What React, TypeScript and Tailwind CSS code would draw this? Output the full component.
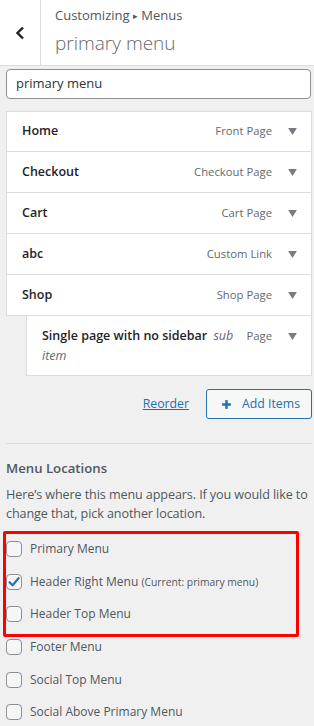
import { Plus } from 'lucide-react'

const items = [
  { title: 'Home', type: 'Front Page' },
  { title: 'Checkout', type: 'Checkout Page' },
  { title: 'Cart', type: 'Cart Page' },
  { title: 'abc', type: 'Custom Link' },
  { title: 'Shop', type: 'Shop Page' },
]

const locations = [
  { label: 'Primary Menu', checked: false },
  { label: 'Header Right Menu', checked: true, current: '(Current: primary menu)' },
  { label: 'Header Top Menu', checked: false },
  { label: 'Footer Menu', checked: false },
  { label: 'Social Top Menu', checked: false },
  { label: 'Social Above Primary Menu', checked: false },
]

function Arrow() {
  return (
    <svg width="9" height="7" viewBox="0 0 10 8" className="shrink-0">
      <path d="M0 0 H10 L5 8 Z" fill="#787c82" />
    </svg>
  )
}

function Checkbox({ checked }: { checked: boolean }) {
  return (
    <span className="flex h-4 w-4 shrink-0 items-center justify-center rounded-[4px] border border-[#8c8f94] bg-[#f6f6f6]">
      {checked && (
        <svg width="14" height="14" viewBox="0 0 14 14">
          <path d="M2.5 7.2 L5.6 10.3 L11.6 3.2" stroke="#2271b1" strokeWidth="2.2" fill="none" strokeLinecap="round" strokeLinejoin="round" />
        </svg>
      )}
    </span>
  )
}

export default function App() {
  return (
    <div
      className="relative min-h-[726px] w-[314px] overflow-hidden bg-[#f0f0f1] text-[#50575e]"
      style={{ fontFamily: '"Open Sans", "Noto Sans", sans-serif' }}
    >
      {/* header */}
      <div className="flex h-[66px] border-b border-[#dcdcde] bg-white">
        <div className="flex w-[41px] shrink-0 items-center justify-center border-r border-[#dcdcde]">
          <svg width="10" height="14" viewBox="0 0 10 14">
            <path d="M8 1.5 L2.5 7 L8 12.5" stroke="#1d2327" strokeWidth="2.4" fill="none" />
          </svg>
        </div>
        <div className="flex flex-col pl-[14px] pt-[5px]">
          <div className="text-[13px] leading-[20px] text-[#50575e]">
            Customizing <span className="text-[9px] align-[1px]">▸</span> Menus
          </div>
          <div className="mt-[2px] text-[19px] font-light leading-[30px] text-[#646970]">primary menu</div>
        </div>
      </div>

      <div className="pl-[6px] pr-[2px] pt-[3px]">
        <div className="mr-[1px] flex h-[30px] items-center rounded-[4px] border border-[#8c8f94] bg-white px-[9px] text-[13px] text-[#2c3338]">
          primary menu
        </div>

        {/* menu items */}
        <div className="mt-[12px] flex flex-col">
          {items.map((it, i) => (
            <div
              key={it.title}
              className={`flex h-[41px] items-center border-x border-b border-[#dcdcde] bg-white pl-[15px] pr-[14px] ${i === 0 ? 'border-t' : ''}`}
            >
              <span className="flex-1 text-[12.5px] font-semibold text-[#1d2327]">{it.title}</span>
              <span className="mr-[16px] text-[11.3px] text-[#646970]">{it.type}</span>
              <Arrow />
            </div>
          ))}
          <div className="ml-[20px] flex items-start border-x border-b border-[#dcdcde] bg-white pb-[9px] pl-[15px] pr-[14px] pt-[10px]">
            <span className="mr-[10px] flex-1 text-[12.5px] leading-[20px] text-[#1d2327]">
              <span className="font-semibold">Single page with no sidebar</span>{' '}
              <span className="ml-[3px] italic text-[#646970]">sub item</span>
            </span>
            <span className="mr-[16px] text-[11.3px] leading-[20px] text-[#646970]">Page</span>
            <span className="pt-[7px]">
              <Arrow />
            </span>
          </div>
        </div>

        <div className="mt-[13px] flex items-center justify-end gap-[17px]">
          <a className="text-[12.3px] text-[#2271b1] underline">Reorder</a>
          <button className="flex h-[30px] items-center gap-[8px] rounded-[3px] border border-[#2271b1] bg-[#f6f7f7] pl-[12px] pr-[11px] text-[12.3px] text-[#2271b1]">
            <Plus size={15} strokeWidth={4} strokeLinecap="butt" />
            Add Items
          </button>
        </div>

        <div className="mt-[24px] border-t border-[#dcdcde]" />

        <div className="pt-[14px]">
          <div className="text-[13.2px] font-semibold leading-[20px]">Menu Locations</div>
          <p className="mt-[7px] text-[12.6px] leading-[19px] tracking-[-0.1px]">
            Here’s where this menu appears. If you would like to change that, pick another location.
          </p>
          <div className="mt-[10px] flex flex-col">
            {locations.map((l) => (
              <label key={l.label} className="flex h-[32.6px] items-center gap-[8px] text-[12px]">
                <Checkbox checked={l.checked} />
                <span>
                  {l.label} {l.current && <span className="text-[10.3px]">{l.current}</span>}
                </span>
              </label>
            ))}
          </div>
        </div>
      </div>

      {/* annotation */}
      <div className="pointer-events-none absolute left-[3px] top-[531px] h-[106px] w-[296px] rounded-[2px] border-[3px] border-[#ff0000]" />
    </div>
  )
}
